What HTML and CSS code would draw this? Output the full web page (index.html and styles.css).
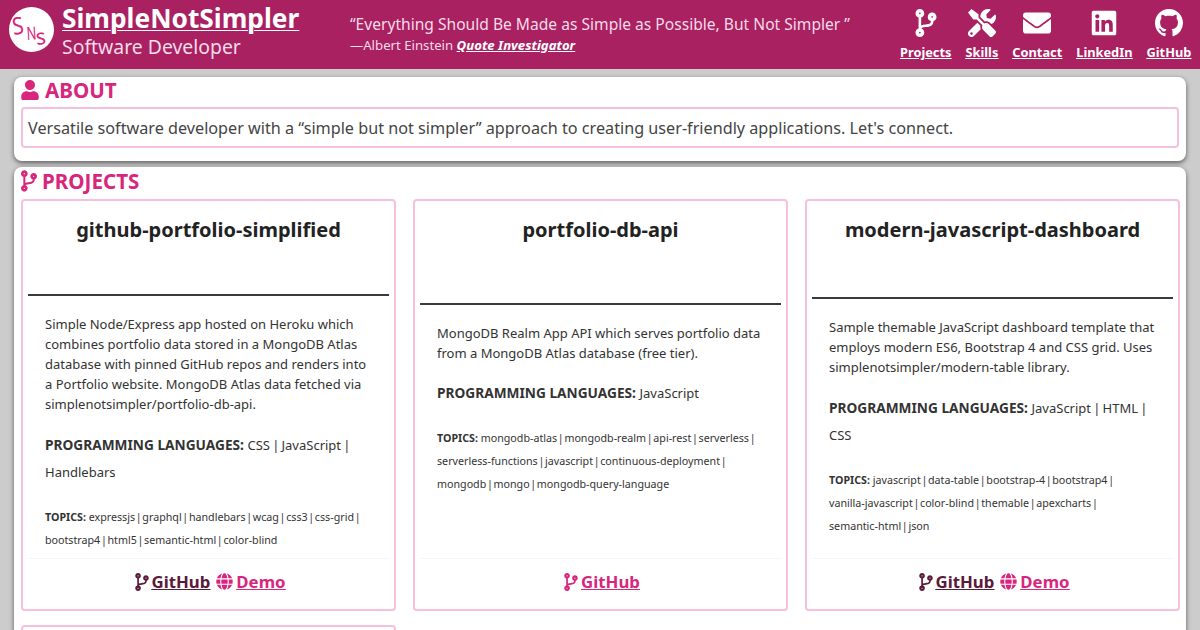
FILE: index.html
```html
<!DOCTYPE html>
<html lang="en">
<head>
<meta charset="utf-8">
<title>SimpleNotSimpler</title>
<link rel="stylesheet" href="styles.css">
</head>
<body>
<svg class="defs" width="0" height="0" aria-hidden="true">
  <symbol id="i-branch" viewBox="0 0 384 512"><path d="M384 144c0-44.2-35.8-80-80-80s-80 35.8-80 80c0 36.4 24.3 67.1 57.5 76.8-.6 16.1-4.2 28.5-11 36.9-15.4 19.2-49.3 22.4-85.2 25.7-28.2 2.6-57.4 5.4-81.3 16.9v-144c32.5-10.2 56-40.5 56-76.3 0-44.2-35.8-80-80-80S0 35.8 0 80c0 35.8 23.5 66.1 56 76.3v199.3C23.5 365.9 0 396.2 0 432c0 44.2 35.8 80 80 80s80-35.8 80-80c0-34-21.2-63.1-51.2-74.6 3.1-5.2 7.8-9.8 14.9-13.4 16.2-8.2 40.4-10.4 66.1-12.8 42.2-3.9 90-8.4 118.2-43.4 14-17.4 21.1-39.8 21.6-67.9 31.6-10.8 54.4-40.7 54.4-75.9zM80 64c8.8 0 16 7.2 16 16s-7.2 16-16 16-16-7.2-16-16 7.2-16 16-16zm0 384c-8.8 0-16-7.2-16-16s7.2-16 16-16 16 7.2 16 16-7.2 16-16 16zm224-320c8.8 0 16 7.2 16 16s-7.2 16-16 16-16-7.2-16-16 7.2-16 16-16z"/></symbol>
  <symbol id="i-user" viewBox="0 0 448 512"><path d="M224 256c70.7 0 128-57.3 128-128S294.7 0 224 0 96 57.3 96 128s57.3 128 128 128zm89.6 32h-16.7c-22.2 10.2-46.9 16-72.9 16s-50.6-5.8-72.9-16h-16.7C60.2 288 0 348.2 0 422.4V464c0 26.5 21.5 48 48 48h352c26.5 0 48-21.5 48-48v-41.6c0-74.2-60.2-134.4-134.4-134.4z"/></symbol>
  <symbol id="i-tools" viewBox="0 0 512 512"><path d="M501.1 395.7L384 278.6c-23.1-23.1-57.6-27.6-85.4-13.9L192 158.1V96L64 0 0 64l96 128h62.1l106.6 106.6c-13.6 27.8-9.2 62.3 13.9 85.4l117.1 117.1c14.6 14.6 38.2 14.6 52.7 0l52.7-52.7c14.5-14.6 14.5-38.2 0-52.7zM331.7 225c28.3 0 54.9 11 74.9 31l19.4 19.4c15.8-6.9 30.8-16.5 43.8-29.5 37.1-37.1 49.7-89.3 37.9-136.7-2.2-9-13.5-12.1-20.1-5.5l-74.4 74.4-67.9-11.3L334 98.9l74.4-74.4c6.6-6.6 3.4-17.9-5.7-20.2-47.4-11.7-99.6.9-136.6 37.9-28.5 28.5-41.9 66.1-41.2 103.6l82.1 82.1c8.1-1.9 16.5-2.9 24.7-2.9zm-103.9 82l-56.7-56.7L18.7 402.8c-25 25-25 65.5 0 90.5s65.5 25 90.5 0l123.6-123.6c-7.6-19.9-9.9-41.6-5-62.7zM64 472c-13.2 0-24-10.8-24-24 0-13.3 10.7-24 24-24s24 10.7 24 24c0 13.2-10.7 24-24 24z"/></symbol>
  <symbol id="i-mail" viewBox="0 0 512 512"><path d="M502.3 190.8c3.9-3.1 9.7-.2 9.7 4.7V400c0 26.5-21.5 48-48 48H48c-26.5 0-48-21.5-48-48V195.6c0-5 5.7-7.8 9.7-4.7 22.4 17.4 52.1 39.5 154.1 113.6 21.1 15.4 56.7 47.8 92.2 47.6 35.7.3 72-32.8 92.3-47.6 102-74.1 131.6-96.3 154-113.7zM256 320c23.2.4 56.6-29.2 73.4-41.4 132.7-96.3 142.8-104.7 173.4-128.7 5.8-4.5 9.2-11.5 9.2-18.9v-19c0-26.5-21.5-48-48-48H48C21.5 64 0 85.5 0 112v19c0 7.4 3.4 14.3 9.2 18.9 30.6 23.9 40.7 32.4 173.4 128.7 16.8 12.2 50.2 41.8 73.4 41.4z"/></symbol>
  <symbol id="i-linkedin" viewBox="0 0 448 512"><path d="M416 32H31.9C14.3 32 0 46.5 0 64.3v383.4C0 465.5 14.3 480 31.9 480H416c17.6 0 32-14.5 32-32.3V64.3c0-17.8-14.4-32.3-32-32.3zM135.4 416H69V202.2h66.5V416zm-33.2-243c-21.3 0-38.5-17.3-38.5-38.5S80.9 96 102.2 96c21.2 0 38.5 17.3 38.5 38.5 0 21.3-17.2 38.5-38.5 38.5zm282.1 243h-66.4V312c0-24.8-.5-56.7-34.5-56.7-34.6 0-39.9 27-39.9 54.9V416h-66.4V202.2h63.7v29.2h.9c8.9-16.8 30.6-34.5 62.9-34.5 67.2 0 79.7 44.3 79.7 101.9V416z"/></symbol>
  <symbol id="i-github" viewBox="0 0 16 16"><path d="M8 0C3.58 0 0 3.58 0 8c0 3.54 2.29 6.53 5.47 7.59.4.07.55-.17.55-.38 0-.19-.01-.82-.01-1.49-2.01.37-2.53-.49-2.69-.94-.09-.23-.48-.94-.82-1.13-.28-.15-.68-.52-.01-.53.63-.01 1.08.58 1.23.82.72 1.21 1.87.87 2.33.66.07-.52.28-.87.51-1.07-1.78-.2-3.64-.89-3.64-3.95 0-.87.31-1.59.82-2.15-.08-.2-.36-1.02.08-2.12 0 0 .67-.21 2.2.82.64-.18 1.32-.27 2-.27.68 0 1.36.09 2 .27 1.53-1.04 2.2-.82 2.2-.82.44 1.1.16 1.92.08 2.12.51.56.82 1.27.82 2.15 0 3.07-1.87 3.75-3.65 3.95.29.25.54.73.54 1.48 0 1.07-.01 1.93-.01 2.2 0 .21.15.46.55.38A8.013 8.013 0 0016 8c0-4.42-3.58-8-8-8z"/></symbol>
  <symbol id="i-globe" viewBox="0 0 496 512"><path d="M336.5 160C322 70.7 287.8 8 248 8s-74 62.7-88.5 152h177zM152 256c0 22.2 1.2 43.5 3.3 64h185.3c2.1-20.5 3.3-41.8 3.3-64s-1.2-43.5-3.3-64H155.3c-2.1 20.5-3.3 41.8-3.3 64zm324.7-96c-28.6-67.9-86.5-120.4-158-141.6 24.4 33.8 41.2 84.7 50 141.6h108zM177.2 18.4C105.8 39.6 47.8 92.1 19.3 160h108c8.7-56.9 25.5-107.8 49.9-141.6zM487.4 192H372.7c2.1 21 3.3 42.5 3.3 64s-1.2 43-3.3 64h114.6c5.5-20.5 8.6-41.8 8.6-64s-3.1-43.5-8.5-64zM120 256c0-21.5 1.2-43 3.3-64H8.6C3.2 212.5 0 233.8 0 256s3.2 43.5 8.6 64h114.6c-2-21-3.2-42.5-3.2-64zm39.5 96c14.5 89.3 48.7 152 88.5 152s74-62.7 88.5-152h-177zm159.3 141.6c71.4-21.2 129.4-73.7 158-141.6h-108c-8.8 56.9-25.6 107.8-50 141.6zM19.3 352c28.6 67.9 86.5 120.4 158 141.6-24.4-33.8-41.2-84.7-50-141.6h-108z"/></symbol>
</svg>

<header class="site-header">
  <div class="brand">
    <svg class="logo" viewBox="0 0 45 45" role="img" aria-label="SNS logo">
      <circle cx="22.5" cy="22.5" r="22.5" fill="#fff"/>
      <text class="logo-text" font-size="24" transform="translate(4.5 28) rotate(-8) scale(.85 1)">S</text>
      <text class="logo-text" font-size="18" transform="translate(18 33) rotate(-4) scale(.72 1)">N</text>
      <text class="logo-text" font-size="22" transform="translate(27.5 38) rotate(-6) scale(.95 1)">s</text>
    </svg>
    <div class="brand-text">
      <a class="brand-name" href="#">SimpleNotSimpler</a>
      <div class="brand-role">Software Developer</div>
    </div>
  </div>
  <div class="quote">
    <div class="quote-text">“Everything Should Be Made as Simple as Possible, But Not Simpler ”</div>
    <div class="quote-by">—Albert Einstein <a href="#">Quote Investigator</a></div>
  </div>
  <nav class="nav">
    <a href="#"><svg class="nav-icon"><use href="#i-branch"/></svg><span>Projects</span></a>
    <a href="#"><svg class="nav-icon"><use href="#i-tools"/></svg><span>Skills</span></a>
    <a href="#"><svg class="nav-icon"><use href="#i-mail"/></svg><span>Contact</span></a>
    <a href="#"><svg class="nav-icon"><use href="#i-linkedin"/></svg><span>LinkedIn</span></a>
    <a href="#"><svg class="nav-icon"><use href="#i-github"/></svg><span>GitHub</span></a>
  </nav>
</header>

<main class="page">
  <section class="panel panel-about">
    <h2 class="panel-title about-title"><svg class="title-icon user"><use href="#i-user"/></svg>ABOUT</h2>
    <p class="about-box">Versatile software developer with a “simple but not simpler” approach to creating user-friendly applications. Let's connect.</p>
  </section>

  <section class="panel panel-projects">
    <h2 class="panel-title projects-title"><svg class="title-icon branch"><use href="#i-branch"/></svg>PROJECTS</h2>
    <div class="grid">
      <article class="card">
        <div class="card-head head-a"><h3>github-portfolio-simplified</h3></div>
        <div class="card-body">
          <p class="desc">Simple Node/Express app hosted on Heroku which<br>combines portfolio data stored in a MongoDB Atlas<br>database with pinned GitHub repos and renders into<br>a Portfolio website. MongoDB Atlas data fetched via<br>simplenotsimpler/portfolio-db-api.</p>
          <p class="langs"><b>PROGRAMMING LANGUAGES: </b>CSS | JavaScript |<br>Handlebars</p>
          <p class="topics"><b>TOPICS: </b>expressjs | graphql | handlebars | wcag | css3 | css-grid |<br>bootstrap4 | html5 | semantic-html | color-blind</p>
        </div>
        <div class="card-foot">
          <a class="gh" href="#"><svg class="foot-icon fb"><use href="#i-branch"/></svg><span>GitHub</span></a>
          <a class="demo" href="#"><svg class="foot-icon fg"><use href="#i-globe"/></svg><span>Demo</span></a>
        </div>
      </article>

      <article class="card">
        <div class="card-head head-b"><h3>portfolio-db-api</h3></div>
        <div class="card-body">
          <p class="desc">MongoDB Realm App API which serves portfolio data<br>from a MongoDB Atlas database (free tier).</p>
          <p class="langs"><b>PROGRAMMING LANGUAGES: </b>JavaScript</p>
          <p class="topics"><b>TOPICS: </b>mongodb-atlas | mongodb-realm | api-rest | serverless |<br>serverless-functions | javascript | continuous-deployment |<br>mongodb | mongo | mongodb-query-language</p>
        </div>
        <div class="card-foot">
          <a class="demo" href="#"><svg class="foot-icon fb"><use href="#i-branch"/></svg><span>GitHub</span></a>
        </div>
      </article>

      <article class="card">
        <div class="card-head head-c"><h3>modern-javascript-dashboard</h3></div>
        <div class="card-body">
          <p class="desc">Sample themable JavaScript dashboard template that<br>employs modern ES6, Bootstrap 4 and CSS grid. Uses<br>simplenotsimpler/modern-table library.</p>
          <p class="langs"><b>PROGRAMMING LANGUAGES: </b>JavaScript | HTML |<br>CSS</p>
          <p class="topics"><b>TOPICS: </b>javascript | data-table | bootstrap-4 | bootstrap4 |<br>vanilla-javascript | color-blind | themable | apexcharts |<br>semantic-html | json</p>
        </div>
        <div class="card-foot">
          <a class="gh" href="#"><svg class="foot-icon fb"><use href="#i-branch"/></svg><span>GitHub</span></a>
          <a class="demo" href="#"><svg class="foot-icon fg"><use href="#i-globe"/></svg><span>Demo</span></a>
        </div>
      </article>

      <article class="card card-next"></article>
    </div>
  </section>
</main>
</body>
</html>
```

FILE: styles.css
```css
* { box-sizing: border-box; }
html, body { height: 630px; overflow: hidden; }
body {
  margin: 0;
  background: #cccccc;
  font-family: "Noto Sans", "Open Sans", sans-serif;
  color: #333;
}
.defs { position: absolute; }
svg { fill: currentColor; display: block; }
a { color: inherit; }
p, h2, h3 { margin: 0; }

.site-header {
  height: 69px;
  background: #aa2161;
  color: #fff;
  display: flex;
  padding: 0 0 0 9px;
}
.brand { display: flex; width: 341px; }
.logo { width: 45px; height: 45px; margin-top: 7px; flex: none; }
.logo-text { fill: #d8267d; font-family: "Noto Sans", sans-serif; font-weight: 400; }
.brand-text { margin-left: 8px; }
.brand-name {
  display: block;
  font-size: 26.3px;
  font-weight: 700;
  line-height: 30px;
  margin-top: 3px;
  text-decoration-thickness: 1px;
  text-underline-offset: 2px;
}
.brand-role { font-size: 19.4px; line-height: 26px; margin-top: 1px; color: #f6dbe8; }

.quote { padding-top: 13px; width: 540px; color: #f6dbe8; }
.quote-text { font-size: 15.6px; line-height: 22px; }
.quote-by { font-size: 13.2px; line-height: 18px; margin-top: 1px; }
.quote-by a { color: #fff; font-weight: 700; font-style: italic; }

.nav { display: flex; gap: 14px; padding-top: 9px; margin-left: 10px; font-size: 12.8px; font-weight: 700; }
.nav a { display: flex; flex-direction: column; align-items: center; }
.nav-icon { width: 28px; height: 28px; }
.nav span { margin-top: 6px; line-height: 18px; text-decoration: underline; }

.page { padding: 8px 14px 0; }
.panel {
  background: #fff;
  border-radius: 8px;
  padding: 0 7px;
  box-shadow: 0 2px 5px rgba(0,0,0,.55);
}
.panel-about { height: 84px; }
.panel-projects { margin-top: 6px; height: 480px; }
.panel-title {
  display: flex;
  align-items: center;
  gap: 6px;
  color: #d8267d;
  font-size: 20.6px;
  font-weight: 700;
  line-height: 26px;
  height: 28px;
}
.about-title { height: 26px; margin-bottom: 4px; }
.projects-title { gap: 5px; margin-bottom: 4px; }
.title-icon.user { width: 18px; height: 20px; }
.title-icon.branch { width: 16px; height: 22px; }
.about-box {
  border: 2px solid #f7c0da;
  border-radius: 4px;
  height: 41px;
  padding: 1px 5px 0;
  font-size: 16.2px;
  line-height: 36px;
  color: #444;
  white-space: nowrap;
}

.grid { display: grid; grid-template-columns: repeat(3, 375px); column-gap: 17px; row-gap: 14px; }
.card {
  border: 2px solid #f7c0da;
  border-radius: 4px;
  height: 412px;
  display: flex;
  flex-direction: column;
  padding: 0 5px;
}
.card-next { height: 40px; }
.card-head { border-bottom: 2px solid #3a3a3a; padding-top: 14px; text-align: center; flex: none; }
.head-a { height: 94.6px; }
.head-b { height: 104px; }
.head-c { height: 98px; }
.card-head h3 { font-size: 20px; line-height: 30px; font-weight: 700; color: #222; }
.card-body { flex: 1; padding: 18px 17px 0; font-size: 13px; color: #333; white-space: nowrap; }
.desc { line-height: 20.2px; }
.langs { line-height: 27.5px; margin-top: 16px; word-spacing: -1.2px; }
.langs b { font-size: 13.7px; word-spacing: 0; }
.topics { font-size: 10.7px; line-height: 23px; margin-top: 19px; word-spacing: -2.1px; }
.topics b { word-spacing: 0; }
.card-foot {
  height: 51px;
  border-top: 1px solid #f6f6f6;
  display: flex;
  justify-content: center;
  align-items: center;
  gap: 6px;
  font-size: 16.8px;
  font-weight: 700;
  padding: 0 0 5px 3px;
  flex: none;
}
.card-foot a { display: flex; align-items: center; gap: 3px; }
.card-foot span { text-decoration: underline; }
.gh { color: #5a1a3a; }
.demo { color: #d8267d; }
.foot-icon.fb { width: 14px; height: 18px; }
.foot-icon.fg { width: 17px; height: 17px; }
```
